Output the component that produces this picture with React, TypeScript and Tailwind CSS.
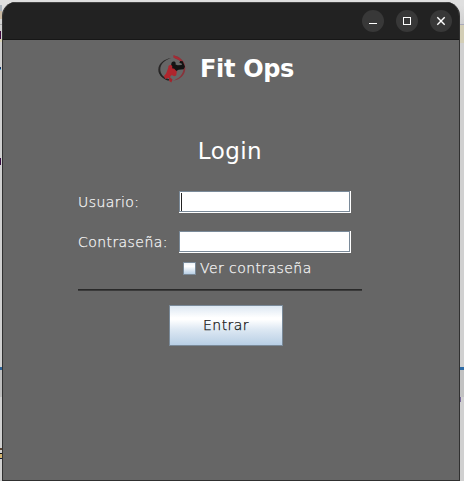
import React from "react";

const controlClass =
  "flex h-[22px] w-[22px] items-center justify-center rounded-full bg-[#383838]";

function TitleBar() {
  return (
    <header className="flex h-[38px] shrink-0 items-center justify-end gap-3 border-t border-[#444] border-b border-b-[#171717] bg-[#222] pr-[7px]">
      <button className={controlClass} aria-label="Minimizar">
        <svg width="22" height="22" shapeRendering="crispEdges">
          <path d="M7 13h8v1H7z" fill="#fff" />
        </svg>
      </button>
      <button className={controlClass} aria-label="Maximizar">
        <svg width="22" height="22" shapeRendering="crispEdges">
          <rect x="7.5" y="7.5" width="7" height="7" fill="none" stroke="#fff" />
        </svg>
      </button>
      <button className={controlClass} aria-label="Cerrar">
        <svg width="22" height="22">
          <path d="M7.3 7.3l7.4 7.4M14.7 7.3l-7.4 7.4" stroke="#fff" strokeWidth="1.4" />
        </svg>
      </button>
    </header>
  );
}

function Logo() {
  return (
    <svg width="28" height="28" viewBox="0 0 28 28" fill="none">
      <path d="M13 3C6 4 .5 8.500.3 14.500c-.1 4.500 3 8 8.200 10.200C5 21.800 2.300 18.500 2.300 14.300 2.300 9 6.500 5.500 13 3z" fill="#292727" />
      <path d="M.8 16c.8 4.200 4.200 8 9.500 9.700l1.500-1.200C6.500 23 3 20.300.8 16z" fill="#222" />
      <path d="M15.500.3c7 1.200 11.800 6.500 11.800 12.900 0 6.600-5.200 11.800-12.800 12.400 6.300-1.800 10.700-6.300 11-11.700.2-4.200-1.800-7.600-6.300-9.500L15.800 2.800z" fill="#89323a" />
      <path d="M15.600.3l6 2.700 3.500 5-5-3.700-4.500-1.500z" fill="#a62b34" />
      <path d="M13.300 9.500c-.1-2 1-3.200 2.700-3 1.400.2 2.100 1.600 1.500 3l2.200.8 4.300-.2-.6-1.800-2-.3.7-2 2.600.3 2.300 5.500-1.400 2.400-5 .5-2.300 1.300-1 4.100-3.500-2.500-2.500-4.700z" fill="#131313" />
      <path d="M10.300 12.800c-.2-1.900.7-2.900 2.300-2.700 1.600.1 2.100 1.500 1.500 3.100l2.200.6 2.500 2.700-.6 4.100-2 .7-2.400-1.400-1.600 1.600.4 2-2.600-.5-2.900 1-1.200-3 2.200-2.600z" fill="#b0252d" />
      <path d="M11 22.800l1.700.2 1.900 1.600-1.300 3-2.100-1.500z" fill="#a4232b" />
    </svg>
  );
}

function Field({ id, label, type, focused = false }: { id: string; label: string; type: string; focused?: boolean }) {
  return (
    <div className="flex h-[22px] items-center">
      <label htmlFor={id} className="w-[101px] whitespace-nowrap text-[#f4f4f4]">
        {label}
      </label>
      <div className="h-[22px] w-[172px] border-r border-b border-white">
        <div className="h-full border border-[#7a8a99] bg-white">
          <div className="flex h-full border-b border-l border-white pt-px">
            {focused && <span className="h-[18px] w-px shrink-0 bg-[#222]" />}
            <input id={id} type={type} className="min-w-0 flex-1 bg-transparent outline-none" />
          </div>
        </div>
      </div>
    </div>
  );
}

function Desktop({ children }: { children: React.ReactNode }) {
  return (
    <div className="flex h-[481px] w-[464px] overflow-hidden bg-[linear-gradient(#dfdfdf_0_5px,#d0d0d0_24px,#d0d0d0)]">
      <div className="flex w-[2px] shrink-0 flex-col">
        <div className="mt-[5px] h-[6px] bg-[#aab2bb]" />
        <div className="h-[8px] bg-[#c8b8a2]" />
        <div className="mt-[5px] h-px bg-[#aaa]" />
        <div className="mt-[6px] h-[8px] w-px bg-[#420b40]" />
        <div className="h-[3px] bg-[#d8d2b4]" />
        <div className="mt-[25px] h-[2px] w-px bg-[#17376d]" />
        <div className="h-px w-px bg-[#4fa5cf]" />
        <div className="mt-[88px] h-[7px] w-px bg-[#380d43]" />
        <div className="mt-[202px] h-[3px] bg-[#2e6398]" />
        <div className="h-[27px] bg-[#bdbdbd]" />
        <div className="mt-[51px] h-[2px] bg-[#5c4635]" />
        <div className="mt-[3px] h-px bg-[#111]" />
        <div className="h-[4px] bg-[#d2b36f]" />
        <div className="h-px bg-[#111a3a]" />
      </div>
      {children}
      <div className="flex w-[4px] shrink-0 flex-col">
        <div className="mt-[24px] h-px bg-[#aaaabc]" />
        <div className="h-[18px] bg-[#d3ceb6]" />
        <div className="mt-[324px] h-[3px] bg-[#2e6ba5]" />
        <div className="h-[27px] bg-[#c2c2c2]" />
        <div className="h-[5px] w-px bg-[#7b6b9c]" />
      </div>
    </div>
  );
}

export default function App() {
  return (
    <Desktop>
      <main className="mt-[2px] flex w-[458px] shrink-0 flex-col overflow-hidden rounded-t-[14px] border-x border-b border-[#303030] bg-[#666] font-['DejaVu_Sans_Light','DejaVu_Sans',sans-serif] text-[14px] tracking-[0.43px] leading-[18px] [-webkit-text-stroke:0.25px]">
        <TitleBar />
        <div className="flex h-[58px] items-center justify-center gap-[14px] pr-[10px]">
          <Logo />
          <h1 className="font-['DejaVu_Sans',sans-serif] text-[24px] leading-[28px] font-bold tracking-[-0.3px] text-white [-webkit-text-stroke:0]">Fit Ops</h1>
        </div>
        <h2 className="mt-[39px] pr-[2px] text-center font-['DejaVu_Sans',sans-serif] text-[23px] leading-[28px] tracking-[0.45px] text-white [-webkit-text-stroke:0]">Login</h2>
        <form className="mt-[26px] ml-[75px] flex w-[284px] flex-col" onSubmit={(e) => e.preventDefault()}>
          <div className="flex flex-col gap-[18px]">
            <Field id="usuario" label="Usuario:" type="text" focused />
            <Field id="contrasena" label="Contraseña:" type="password" />
          </div>
          <label className="mt-[6px] ml-[105px] flex h-[18px] items-center gap-[4px] text-[#f4f4f4]">
            <span className="h-[13px] w-[13px] border border-[#7a8a99] bg-[linear-gradient(#eef3f8,#fff_30%,#b8cfe5)]" />
            <span className="whitespace-nowrap">Ver contraseña</span>
          </label>
          <hr className="mt-[12px] h-[2px] border-t border-b border-t-[#292929] border-b-[#3b3b3b]" />
          <button className="mt-[14px] ml-[91px] h-[41px] w-[114px] border border-[#7a8a99] bg-[linear-gradient(#dde8f3,#fff_30%,#fff_35%,#dde8f3_60%,#b8cfe5)] pb-[2px] text-[#111]">
            Entrar
          </button>
        </form>
      </main>
    </Desktop>
  );
}
